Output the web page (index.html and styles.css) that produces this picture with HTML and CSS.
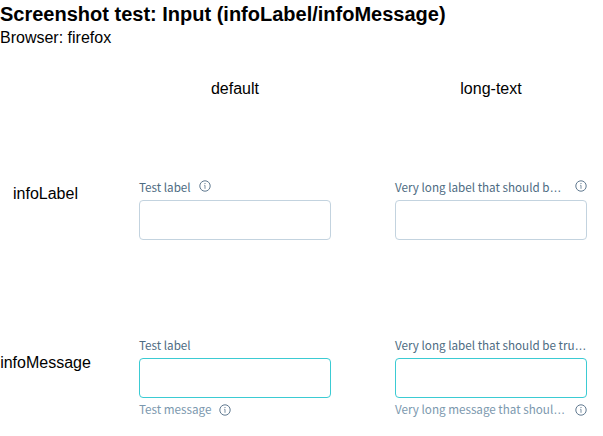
FILE: index.html
```html
<!DOCTYPE html>
<html lang="en">
<head>
<meta charset="utf-8">
<title>Input (infoLabel/infoMessage)</title>
<link rel="stylesheet" href="styles.css">
</head>
<body>
<svg class="sprite" aria-hidden="true"><symbol id="info" viewBox="0 0 12 12"><circle cx="6" cy="6" r="5.2" fill="none" stroke="currentColor" stroke-width=".95"/><path d="M5.3 5.3h.7v3.5" fill="none" stroke="currentColor" stroke-width=".8"/><circle cx="6" cy="3.5" r=".6" fill="currentColor"/></symbol></svg>
<h1>Screenshot test: Input (infoLabel/infoMessage)</h1>
<p class="browser">Browser: firefox</p>
<main class="grid">
  <div></div>
  <div class="head">default</div>
  <div class="head">long-text</div>
  <div class="row-name">infoLabel</div>
  <div class="field">
    <div class="label"><div class="text"><span>Test label</span></div><svg class="icon"><use href="#info"/></svg></div>
    <input class="input" aria-label="Test label">
  </div>
  <div class="field">
    <div class="label spread"><div class="text"><span>Very long label that should b</span>…</div><svg class="icon"><use href="#info"/></svg></div>
    <input class="input" aria-label="Very long label">
  </div>
  <div class="row-name message-name">infoMessage</div>
  <div class="field">
    <div class="label"><div class="text"><span>Test label</span></div></div>
    <input class="input active" aria-label="Test label">
    <div class="message"><div class="text"><span>Test message</span></div><svg class="icon"><use href="#info"/></svg></div>
  </div>
  <div class="field">
    <div class="label"><div class="text"><span>Very long label that should be tru</span>…</div></div>
    <input class="input active" aria-label="Very long label">
    <div class="message spread"><div class="text"><span>Very long message that shoul</span>…</div><svg class="icon"><use href="#info"/></svg></div>
  </div>
</main>
</body>
</html>
```
FILE: styles.css
```css
* { box-sizing: border-box; }
body { margin: 0; height: 436px; overflow: hidden; background: #fff; color: #000; font: 16px/18px "Liberation Sans", Arial, sans-serif; }
.sprite { display: none; }
h1 { margin: 0; padding-top: 3px; font-size: 20px; line-height: 23px; white-space: nowrap; }
.browser { margin: 3px 0 0; }
.grid { display: grid; grid-template-columns: 139px 256px 192px; grid-template-rows: 100px 158px 80px; padding-top: 33px; }
.head { width: 192px; text-align: center; }
.row-name { width: 91px; padding-top: 5px; text-align: center; }
.message-name { padding-top: 16px; }
.field { width: 192px; }
.label, .message { display: flex; gap: 8px; height: 20px; color: #4d6b82; font: 12px/20px "Liberation Sans", Arial, sans-serif; }
.label { line-height: 14px; }
.message { color: #7b98ae; line-height: 22px; }
.spread { justify-content: space-between; }
.text { height: 20px; white-space: nowrap; }
.text span { font-family: "Noto Sans CJK SC", sans-serif; font-size: 11.67px; }
.icon { width: 12px; height: 12px; flex: none; color: #57728a; }
.message .icon { margin-top: 6px; }
.input { display: block; width: 192px; height: 40px; margin: 0; padding: 8px; border: 1px solid #c3d3df; border-radius: 4px; background: #fff; outline: none; }
.active { border-color: #3bcbd3; }
```
